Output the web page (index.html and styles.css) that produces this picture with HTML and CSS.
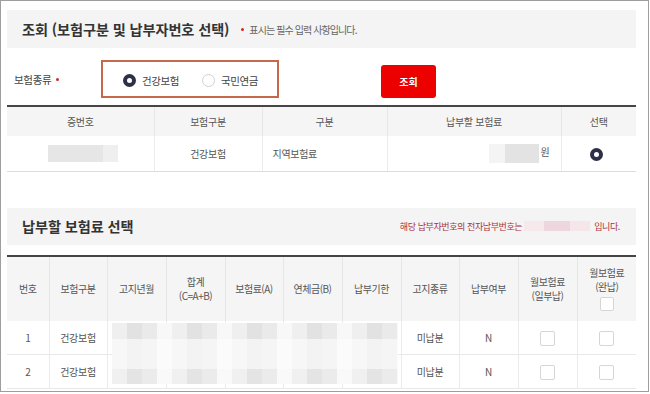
FILE: index.html
```html
<!DOCTYPE html>
<html lang="ko">
<head>
<meta charset="utf-8">
<title>조회</title>
<link rel="stylesheet" href="styles.css">
</head>
<body>
<div class="frame">
  <div class="box-title">
    <h2>조회 (보험구분 및 납부자번호 선택)</h2>
    <span class="req-note"><span class="dot"></span>표시는 필수 입력 사항입니다.</span>
  </div>

  <div class="form-row">
    <div class="label">보험종류<span class="dot"></span></div>
    <div class="radio-group">
      <label class="radio"><span class="rb on"></span>건강보험</label>
      <label class="radio"><span class="rb"></span>국민연금</label>
    </div>
    <button class="btn" type="button">조회</button>
  </div>

  <table class="t1">
    <colgroup>
      <col class="c147"><col class="c108"><col class="c125"><col class="c174"><col class="c75">
    </colgroup>
    <thead>
      <tr><th>증번호</th><th>보험구분</th><th>구분</th><th>납부할 보험료</th><th>선택</th></tr>
    </thead>
    <tbody>
      <tr>
        <td><span class="blur-a"></span></td>
        <td>건강보험</td>
        <td class="left">지역보험료</td>
        <td class="right"><span class="blur-b"></span>원</td>
        <td><span class="rb on sel"></span></td>
      </tr>
    </tbody>
  </table>

  <div class="box-title second">
    <h2>납부할 보험료 선택</h2>
    <span class="epay">해당 납부자번호의 전자납부번호는<span class="blur-pink"></span>입니다.</span>
  </div>

  <div class="t2wrap">
    <table class="t2">
      <colgroup>
        <col class="c42"><col class="c58"><col class="c59"><col class="c59"><col class="c58"><col class="c59"><col class="c59"><col class="c58"><col class="c59"><col class="c59"><col class="c59">
      </colgroup>
      <thead>
        <tr>
          <th>번호</th><th>보험구분</th><th>고지년월</th><th>합계<br>(C=A+B)</th><th>보험료(A)</th><th>연체금(B)</th><th>납부기한</th><th>고지종류</th><th>납부여부</th><th>월보험료<br>(일부납)</th><th>월보험료<br>(완납)<br><span class="cb hcb"></span></th>
        </tr>
      </thead>
      <tbody>
        <tr><td>1</td><td>건강보험</td><td></td><td></td><td></td><td></td><td></td><td>미납분</td><td>N</td><td><span class="cb"></span></td><td><span class="cb"></span></td></tr>
        <tr><td>2</td><td>건강보험</td><td></td><td></td><td></td><td></td><td></td><td>미납분</td><td>N</td><td><span class="cb"></span></td><td><span class="cb"></span></td></tr>
      </tbody>
    </table>
    <div class="blur-overlay">
      <div class="band top"></div>
      <div class="band mid"></div>
      <div class="band bot"></div>
    </div>
  </div>
</div>
</body>
</html>
```

FILE: styles.css
```css
* { box-sizing: border-box; margin: 0; padding: 0; }
html, body { background: #fff; }
body {
  font-family: "Noto Sans CJK KR", "Noto Sans", sans-serif;
  color: #555;
}
.frame {
  width: 649px;
  height: 392px;
  border: 1px solid #9e9e9e;
  padding: 9px 12px 0 6px;
  overflow: hidden;
}

/* section title boxes */
.box-title {
  height: 38px;
  background: #f4f4f4;
  display: flex;
  align-items: center;
  padding: 0 16px 0 15px;
}
.box-title h2 {
  font-size: 14.2px;
  font-weight: 700;
  color: #333;
  line-height: 1;
  letter-spacing: -0.1px;
}
.req-note {
  margin-left: 12px;
  font-size: 10px;
  color: #666;
  display: flex;
  align-items: center;
  letter-spacing: -0.9px;
}
.dot {
  display: inline-block;
  width: 3px;
  height: 3px;
  border-radius: 50%;
  background: #d42424;
  margin-right: 5px;
}
.box-title.second {
  margin-top: 36px;
  height: 37px;
  justify-content: space-between;
}
.epay {
  display: flex;
  align-items: center;
  font-size: 9px;
  color: #a8323f;
  letter-spacing: -0.4px;
}
.blur-pink {
  display: inline-block;
  width: 66px;
  height: 10px;
  margin: 0 4px 0 2px;
  background: linear-gradient(90deg, #f6e9ec 0 20px, #edd6dd 20px 46px, #f5e6ea 46px 66px);
}

/* form row */
.form-row {
  display: flex;
  align-items: flex-start;
  height: 57px;
  padding: 12px 0 0 7px;
}
.label {
  width: 87px;
  height: 38px;
  display: flex;
  align-items: center;
  font-size: 10.5px;
  color: #444;
  letter-spacing: -0.3px;
}
.label .dot { margin: 0 0 0 5px; }
.radio-group {
  width: 178px;
  height: 38px;
  border: 2px solid #c4694b;
  display: flex;
  align-items: center;
  padding: 2px 0 0 20px;
  gap: 23px;
}
.radio {
  display: flex;
  align-items: center;
  gap: 6px;
  font-size: 10.5px;
  color: #444;
  letter-spacing: -0.4px;
}
.rb {
  display: inline-block;
  width: 13px;
  height: 13px;
  border-radius: 50%;
  border: 1px solid #d2d2d2;
  background: #fff;
}
.rb.on {
  border: 4px solid #2e3048;
}
.btn {
  margin: 5px 0 0 102px;
  width: 55px;
  height: 33px;
  border: 0;
  border-radius: 3px;
  background: #ec0000;
  color: #fff;
  font-family: inherit;
  font-size: 10px;
  font-weight: 700;
}

/* tables */
table { width: 100%; border-collapse: collapse; table-layout: fixed; }
.c147 { width: 147px; } .c108 { width: 108px; } .c125 { width: 125px; }
.c174 { width: 174px; } .c75 { width: 75px; }
.c42 { width: 42px; } .c58 { width: 58px; } .c59 { width: 59px; }

.t1 { border-top: 2px solid #454545; }
.t1 th {
  height: 30px;
  background: #f5f5f5;
  font-weight: 400;
  font-size: 10px;
  color: #555;
  border-left: 1px solid #e7e7e7;
  letter-spacing: -0.3px;
}
.t1 td {
  height: 35px;
  border-bottom: 1px solid #dcdcdc;
  border-left: 1px solid #ececec;
  font-size: 10px;
  color: #555;
  text-align: center;
  letter-spacing: -0.3px;
}
.t1 th:first-child, .t1 td:first-child,
.t2 th:first-child, .t2 td:first-child { border-left: 0; }
.t1 td.left { text-align: left; padding-left: 10px; }
.t1 td.right { text-align: right; padding-right: 11px; }
.blur-a {
  display: inline-block;
  vertical-align: middle;
  width: 70px;
  height: 17px;
  margin-left: 5px;
  background: linear-gradient(90deg, #e6e6e6 0 55px, #efefef 55px 70px);
}
.blur-b {
  display: inline-block;
  vertical-align: middle;
  width: 50px;
  height: 19px;
  margin-right: 2px;
  background: linear-gradient(90deg, #f4f4f4 0 16px, #e3e3e3 16px 50px);
}
.rb.sel { vertical-align: middle; margin-left: -4px; }

.t2wrap {
  position: relative;
  margin-top: 10px;
  border-top: 2px solid #454545;
}
.t2 th {
  height: 64px;
  background: #f5f5f5;
  font-weight: 400;
  font-size: 10px;
  line-height: 14px;
  color: #555;
  border-left: 1px solid #e6e6e6;
  letter-spacing: -0.5px;
}
.t2 td {
  height: 34px;
  border-bottom: 1px solid #e8e8e8;
  border-left: 1px solid #ececec;
  font-size: 10px;
  color: #555;
  text-align: center;
  letter-spacing: -0.3px;
}
.cb {
  display: inline-block;
  vertical-align: middle;
  width: 15px;
  height: 15px;
  border: 1px solid #d6d6d6;
  border-radius: 2px;
  background: #fff;
}
.hcb { width: 14px; height: 14px; margin-top: 2px; }

.blur-overlay {
  position: absolute;
  left: 105px;
  top: 66px;
  width: 286px;
  height: 61px;
  display: flex;
  flex-direction: column;
}
.band { background-size: 60px 100%; }
.band.top {
  height: 16px;
  background-image: linear-gradient(90deg, #efefef 0 15px, #e2e2e2 15px 30px, #eaeaea 30px 45px, #f8f8f8 45px 60px);
}
.band.mid {
  height: 30px;
  background-image: linear-gradient(90deg, #f7f7f7 0 15px, #f3f3f3 15px 30px, #f5f5f5 30px 45px, #fbfbfb 45px 60px);
}
.band.bot {
  height: 15px;
  background-image: linear-gradient(90deg, #f0f0f0 0 15px, #e4e4e4 15px 30px, #ebebeb 30px 45px, #f9f9f9 45px 60px);
}
```
